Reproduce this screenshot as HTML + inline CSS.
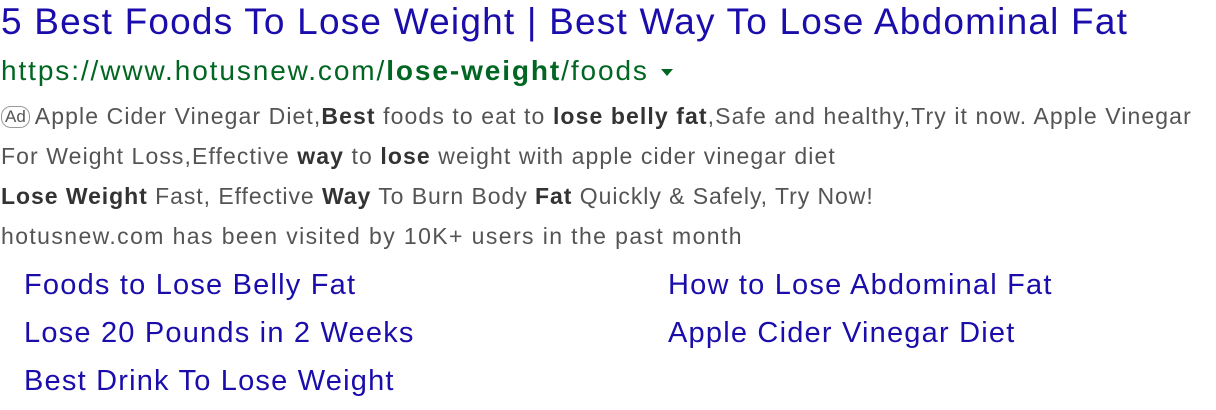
<!DOCTYPE html>
<html><head><style>
body{margin:0;background:#fff;font-family:"Liberation Sans",Arial,sans-serif;width:1216px;height:410px;overflow:hidden;position:relative}
div{position:absolute;white-space:nowrap}
.t{left:1px;top:1px;font-size:37px;color:#1a0dab;letter-spacing:1.2px}
.u{left:1px;top:55px;font-size:28px;color:#006621;letter-spacing:1.9px}
.u .c{display:inline-block;width:0;height:0;border-left:6px solid transparent;border-right:6px solid transparent;border-top:7px solid #006621;vertical-align:middle;margin-left:12px}
.d{left:1px;font-size:23px;color:#545454;letter-spacing:1.1px}
.d b{color:#333}
.ad{display:inline-block;border:1px solid #999;border-radius:10px;font-size:17px;padding:0 3px;line-height:20px;margin-right:5px;vertical-align:2px;color:#545454;letter-spacing:0}
.l{font-size:29px;color:#1a0dab;letter-spacing:1.2px}
</style></head><body>
<div class="t">5 Best Foods To Lose Weight | Best Way To Lose Abdominal Fat</div>
<div class="u">https://www.hotusnew.com/<b>lose-weight</b>/foods<span class="c"></span></div>
<div class="d" style="top:103px"><span class="ad">Ad</span>Apple Cider Vinegar Diet,<b>Best</b> foods to eat to <b>lose belly fat</b>,Safe and healthy,Try it now. Apple Vinegar</div>
<div class="d" style="top:143px">For Weight Loss,Effective <b>way</b> to <b>lose</b> weight with apple cider vinegar diet</div>
<div class="d" style="top:183px;letter-spacing:0.95px"><b>Lose Weight</b> Fast, Effective <b>Way</b> To Burn Body <b>Fat</b> Quickly &amp; Safely, Try Now!</div>
<div class="d" style="top:223px;letter-spacing:1.4px">hotusnew.com has been visited by 10K+ users in the past month</div>
<div class="l" style="left:24px;top:269px">Foods to Lose Belly Fat</div>
<div class="l" style="left:24px;top:317px">Lose 20 Pounds in 2 Weeks</div>
<div class="l" style="left:24px;top:365px">Best Drink To Lose Weight</div>
<div class="l" style="left:668px;top:269px">How to Lose Abdominal Fat</div>
<div class="l" style="left:668px;top:317px">Apple Cider Vinegar Diet</div>
</body></html>
